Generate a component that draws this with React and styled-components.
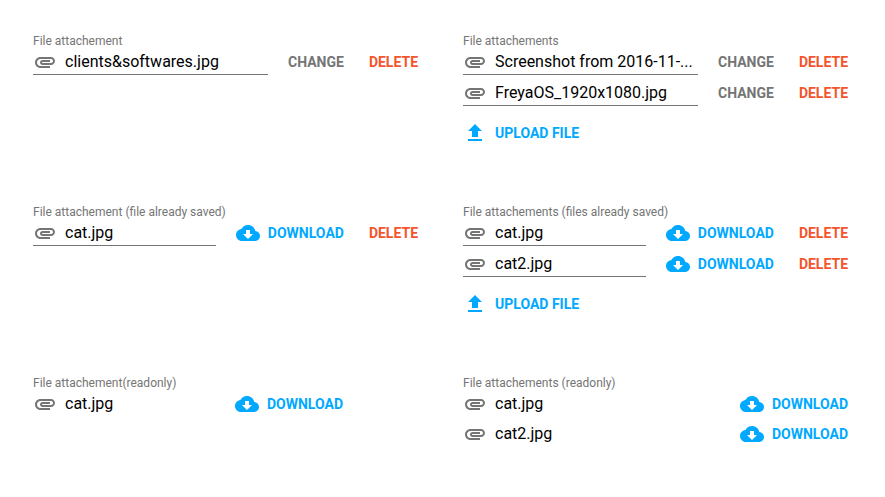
import React from "react";
import styled, { createGlobalStyle } from "styled-components";

const GlobalStyle = createGlobalStyle`
  *, *::before, *::after { box-sizing: border-box; }
  body { margin: 0; background: #fff; color: #000; font-family: Roboto, sans-serif; }
`;

const Page = styled.main`
  display: grid;
  grid-template-columns: repeat(2, minmax(0, 1fr));
  gap: 59px 45px;
  padding: 33px 37px 33px 33px;
`;

const Field = styled.section`
  min-width: 0;
`;

const Label = styled.h2`
  margin: 0;
  font-size: 12px;
  line-height: 16px;
  font-weight: 400;
  color: #757575;
`;

const List = styled.ul`
  display: grid;
  gap: 5px;
  list-style: none;
  margin: 0;
  padding: 0;
`;

const Row = styled.li`
  display: flex;
  align-items: flex-start;
  gap: 20px;
  min-width: 0;
  padding-right: ${(p) => (p.$inset ? "75px" : "0")};
`;

const FileName = styled.div`
  flex: 1;
  min-width: 0;
  display: flex;
  align-items: center;
  gap: 8px;
  border-bottom: ${(p) => (p.$readonly ? "0" : "1px solid #757575")};
`;

const Name = styled.span`
  overflow: hidden;
  white-space: nowrap;
  text-overflow: ellipsis;
  font-size: 16px;
  line-height: 25px;
`;

const Actions = styled.div`
  display: flex;
  gap: 25px;
  padding-top: 1px;
`;

const colors = { primary: "#00a9ff", muted: "#757575", danger: "#f4552c" };

const Button = styled.button`
  display: flex;
  align-items: center;
  gap: 8px;
  margin: 0;
  padding: 0;
  border: 0;
  background: none;
  color: ${(p) => colors[p.$tone]};
  font: 700 14px/24px Roboto, sans-serif;
  text-transform: uppercase;
  cursor: pointer;
`;

const Upload = styled(Button)`
  margin-top: 15px;
`;

const Icon = styled.svg`
  flex: none;
  width: 24px;
  height: 24px;
  fill: ${(p) => p.$color || "currentColor"};
`;

const ClipIcon = () => (
  <Icon viewBox="0 0 24 24" $color="#757575" aria-hidden="true">
    <path d="M2 12.5C2 9.46 4.46 7 7.5 7H18c2.21 0 4 1.79 4 4s-1.79 4-4 4H9.5C8.12 15 7 13.88 7 12.5S8.12 10 9.5 10H17v2H9.41c-.55 0-.55 1 0 1H18c1.1 0 2-.9 2-2s-.9-2-2-2H7.5C5.57 9 4 10.57 4 12.5S5.57 16 7.5 16H17v2H7.5C4.46 18 2 15.54 2 12.5z" />
  </Icon>
);

const CloudIcon = () => (
  <Icon viewBox="0 0 24 24" aria-hidden="true">
    <path d="M19.35 10.04C18.67 6.59 15.64 4 12 4 9.11 4 6.6 5.64 5.35 8.04 2.34 8.36 0 10.91 0 14c0 3.31 2.69 6 6 6h13c2.76 0 5-2.24 5-5 0-2.64-2.05-4.78-4.65-4.96zM17 13l-5 5-5-5h3V9h4v4h3z" />
  </Icon>
);

const UploadIcon = () => (
  <Icon viewBox="0 0 24 24" aria-hidden="true">
    <path d="M9 16h6v-6h4l-7-7-7 7h4zm-4 2h14v2H5z" />
  </Icon>
);

const fields = [
  { label: "File attachement", files: ["clients&softwares.jpg"], actions: ["change", "delete"] },
  {
    label: "File attachements",
    files: ["Screenshot from 2016-11-...", "FreyaOS_1920x1080.jpg"],
    actions: ["change", "delete"],
    upload: true,
  },
  { label: "File attachement (file already saved)", files: ["cat.jpg"], actions: ["download", "delete"] },
  {
    label: "File attachements (files already saved)",
    files: ["cat.jpg", "cat2.jpg"],
    actions: ["download", "delete"],
    upload: true,
  },
  { label: "File attachement(readonly)", files: ["cat.jpg"], actions: ["download"], readonly: true, inset: true },
  { label: "File attachements (readonly)", files: ["cat.jpg", "cat2.jpg"], actions: ["download"], readonly: true },
];

const tones = { change: "muted", delete: "danger", download: "primary" };

export default function App() {
  return (
    <>
      <GlobalStyle />
      <Page>
        {fields.map((field) => (
          <Field key={field.label} aria-label={field.label}>
            <Label>{field.label}</Label>
            <List>
              {field.files.map((file) => (
                <Row key={file} $inset={field.inset}>
                  <FileName $readonly={field.readonly}>
                    <ClipIcon />
                    <Name>{file}</Name>
                  </FileName>
                  <Actions>
                    {field.actions.map((action) => (
                      <Button key={action} type="button" $tone={tones[action]}>
                        {action === "download" && <CloudIcon />}
                        {action}
                      </Button>
                    ))}
                  </Actions>
                </Row>
              ))}
            </List>
            {field.upload && (
              <Upload type="button" $tone="primary">
                <UploadIcon />
                Upload file
              </Upload>
            )}
          </Field>
        ))}
      </Page>
    </>
  );
}
